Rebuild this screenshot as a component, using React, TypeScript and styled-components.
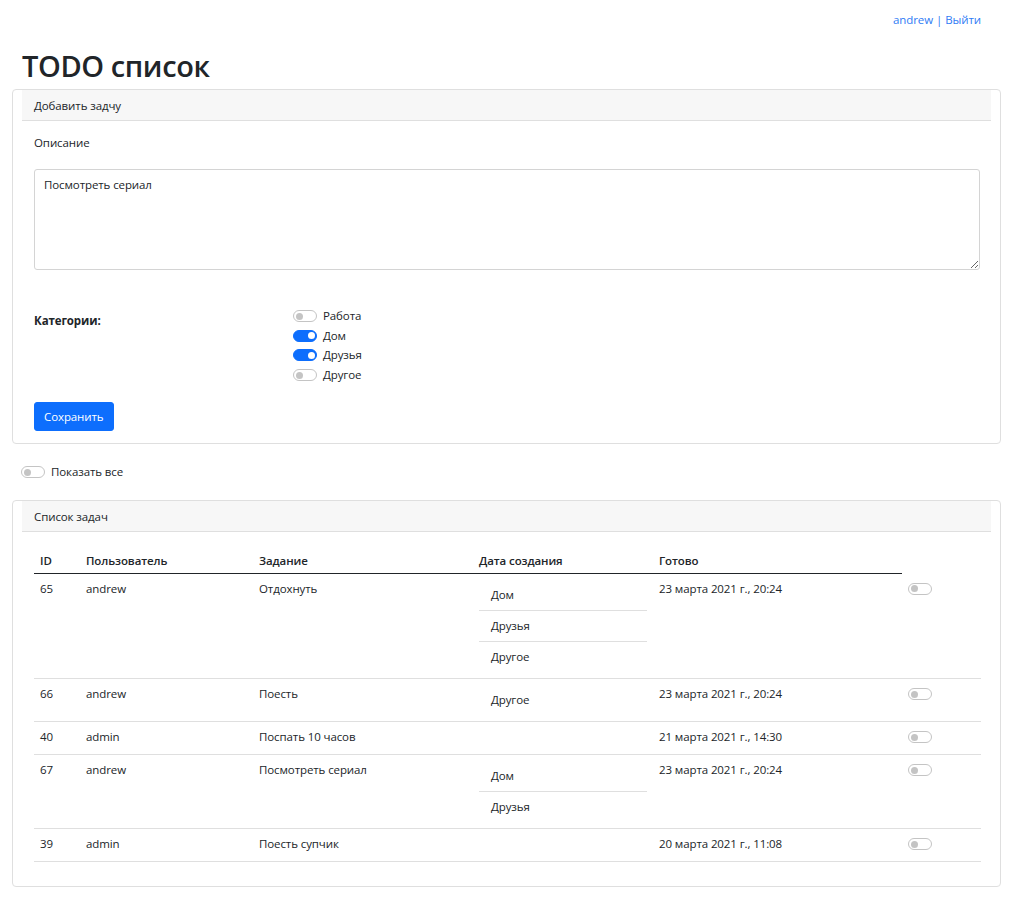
import React from "react";
import styled, { createGlobalStyle } from "styled-components";

const GlobalStyle = createGlobalStyle`
  html, body { margin: 0; padding: 0; background: #fff; }
  body {
    font-family: "Open Sans", "Noto Sans", sans-serif;
    font-size: 11.5px;
    letter-spacing: -0.1px;
    line-height: 18px;
    color: #212529;
  }
  * { box-sizing: border-box; }
`;

const Page = styled.div`
  width: 989px;
  margin-left: 12px;
  padding-bottom: 13px;
`;

const TopBar = styled.div`
  display: flex;
  justify-content: flex-end;
  padding: 11px 20px 0 0;
  height: 48px;
`;

const TopLink = styled.a`
  color: #2f7cf5;
  text-decoration: none;
`;

const Sep = styled.span`
  color: #2f7cf5;
  margin: 0 3px;
`;

const Title = styled.h1`
  margin: 0 0 5px 10px;
  font-size: 29px;
  line-height: 36px;
  font-weight: 600;
  letter-spacing: -0.4px;
`;

const Card = styled.section`
  border: 1px solid #dfdfdf;
  border-radius: 4px;
  background: #fff;
`;

const CardHeader = styled.div`
  margin: 0 9px;
  height: 31px;
  padding: 7px 12px 5px;
  background: #f7f7f7;
  border-bottom: 1px solid #dfdfdf;
`;

const CardBody = styled.div<{ $pb: number }>`
  padding: 0 21px ${(p) => p.$pb}px 21px;
`;

const FieldLabel = styled.div`
  margin-top: 13px;
`;

const TextArea = styled.textarea`
  display: block;
  margin-top: 17px;
  width: 946px;
  height: 101px;
  padding: 6px 9px;
  font-family: inherit;
  font-size: 11.5px;
  letter-spacing: -0.1px;
  line-height: 18px;
  color: #212529;
  border: 1px solid #d4d4d4;
  border-radius: 3px;
  resize: vertical;
  outline: none;
`;

const CategoriesRow = styled.div`
  display: flex;
  margin-top: 37px;
`;

const CategoriesLabel = styled.div`
  width: 259px;
  font-weight: 700;
  padding-top: 5px;
`;

const SwitchList = styled.div`
  display: flex;
  flex-direction: column;
  gap: 1.7px;
`;

const SwitchRow = styled.label`
  display: flex;
  align-items: center;
  gap: 6px;
  height: 18px;
`;

const Switch = styled.span<{ $on?: boolean }>`
  position: relative;
  display: block;
  width: 24px;
  height: 12px;
  border-radius: 6px;
  border: 1px solid ${(p) => (p.$on ? "#0d6efd" : "#c4c4c4")};
  background: ${(p) => (p.$on ? "#0d6efd" : "#fff")};
  flex: none;
  &::after {
    content: "";
    position: absolute;
    top: 1.5px;
    left: ${(p) => (p.$on ? "13.5px" : "1.5px")};
    width: 7px;
    height: 7px;
    border-radius: 50%;
    background: ${(p) => (p.$on ? "#fff" : "#c4c4c4")};
  }
`;

const Button = styled.button`
  margin-top: 18px;
  height: 29px;
  padding: 0 9px;
  border: 1px solid #0d6efd;
  background: #0d6efd;
  color: #fff;
  border-radius: 3px;
  font-family: inherit;
  font-size: 11.5px;
  letter-spacing: -0.1px;
  line-height: 18px;
`;

const ShowAll = styled.label`
  display: flex;
  align-items: center;
  gap: 6px;
  height: 18px;
  margin: 19px 0 19px 9px;
`;

const Table = styled.table`
  margin-top: 14px;
  width: 947px;
  border-collapse: collapse;
  table-layout: fixed;
`;

const Th = styled.th`
  text-align: left;
  font-weight: 600;
  padding: 6px 6px 3px;
  border-bottom: 1px solid #212529;
  vertical-align: bottom;
`;

const Td = styled.td`
  padding: 6px;
  border-bottom: 1px solid #dfdfdf;
  vertical-align: top;
`;

const CatList = styled.ul`
  list-style: none;
  margin: 0;
  padding: 0;
`;

const CatItem = styled.li`
  padding: 6px 12px;
  border-bottom: 1px solid #dfdfdf;
  &:last-child { border-bottom: none; }
`;

const SwitchCell = styled.div`
  height: 20px;
  padding-top: 3px;
`;

type Task = { id: number; user: string; task: string; cats: string[]; date: string };

const tasks: Task[] = [
  { id: 65, user: "andrew", task: "Отдохнуть", cats: ["Дом", "Друзья", "Другое"], date: "23 марта 2021 г., 20:24" },
  { id: 66, user: "andrew", task: "Поесть", cats: ["Другое"], date: "23 марта 2021 г., 20:24" },
  { id: 40, user: "admin", task: "Поспать 10 часов", cats: [], date: "21 марта 2021 г., 14:30" },
  { id: 67, user: "andrew", task: "Посмотреть сериал", cats: ["Дом", "Друзья"], date: "23 марта 2021 г., 20:24" },
  { id: 39, user: "admin", task: "Поесть супчик", cats: [], date: "20 марта 2021 г., 11:08" },
];

const categories = [
  { name: "Работа", on: false },
  { name: "Дом", on: true },
  { name: "Друзья", on: true },
  { name: "Другое", on: false },
];

export default function App() {
  return (
    <>
      <GlobalStyle />
      <Page>
        <TopBar>
          <TopLink href="#">andrew</TopLink>
          <Sep>|</Sep>
          <TopLink href="#">Выйти</TopLink>
        </TopBar>
        <Title>TODO список</Title>
        <Card>
          <CardHeader>Добавить задчу</CardHeader>
          <CardBody $pb={12}>
            <FieldLabel>Описание</FieldLabel>
            <TextArea defaultValue="Посмотреть сериал" />
            <CategoriesRow>
              <CategoriesLabel>Категории:</CategoriesLabel>
              <SwitchList>
                {categories.map((c) => (
                  <SwitchRow key={c.name}>
                    <Switch $on={c.on} />
                    {c.name}
                  </SwitchRow>
                ))}
              </SwitchList>
            </CategoriesRow>
            <Button>Сохранить</Button>
          </CardBody>
        </Card>
        <ShowAll>
          <Switch />
          Показать все
        </ShowAll>
        <Card>
          <CardHeader>Список задач</CardHeader>
          <CardBody $pb={24}>
            <Table>
              <colgroup>
                <col style={{ width: 46 }} />
                <col style={{ width: 173 }} />
                <col style={{ width: 220 }} />
                <col style={{ width: 180 }} />
                <col style={{ width: 249 }} />
                <col style={{ width: 79 }} />
              </colgroup>
              <thead>
                <tr>
                  <Th>ID</Th>
                  <Th>Пользователь</Th>
                  <Th>Задание</Th>
                  <Th>Дата создания</Th>
                  <Th>Готово</Th>
                </tr>
              </thead>
              <tbody>
                {tasks.map((t) => (
                  <tr key={t.id}>
                    <Td>{t.id}</Td>
                    <Td>{t.user}</Td>
                    <Td>{t.task}</Td>
                    <Td>
                      {t.cats.length > 0 && (
                        <CatList>
                          {t.cats.map((c) => (
                            <CatItem key={c}>{c}</CatItem>
                          ))}
                        </CatList>
                      )}
                    </Td>
                    <Td>{t.date}</Td>
                    <Td>
                      <SwitchCell>
                        <Switch />
                      </SwitchCell>
                    </Td>
                  </tr>
                ))}
              </tbody>
            </Table>
          </CardBody>
        </Card>
      </Page>
    </>
  );
}
